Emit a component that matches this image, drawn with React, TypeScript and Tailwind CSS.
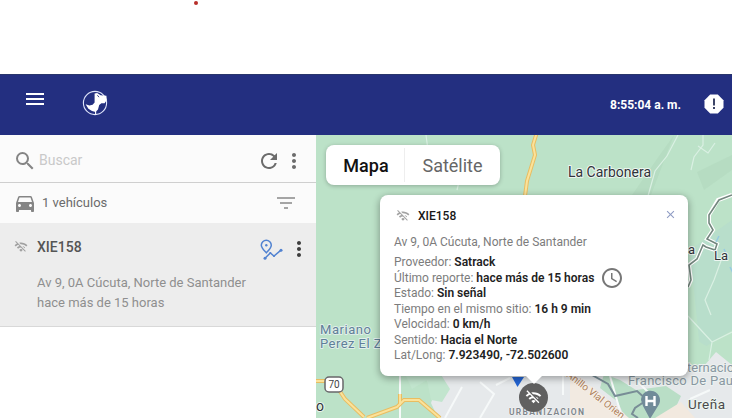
import React from 'react';
import {
  MdMenu, MdSearch, MdRefresh, MdMoreVert, MdFilterList, MdDirectionsCar,
  MdAccessTime, MdWifiOff, MdClose,
} from 'react-icons/md';

function DogLogo() {
  return (
    <svg viewBox="0 0 26 26" className="size-[26px]">
      <circle cx="13" cy="13" r="11.6" fill="none" stroke="#dfe5fa" strokeWidth="1.1" />
      <path
        d="M12.6 3.4 L15.2 3 L18.6 5.2 L24.4 5.8 L24.8 10 L22.6 13.2 L19.4 13.2 L17.2 15 L16 19.6 L13.6 22 L10 21 L6.4 18.8 L3.6 14.2 L7.4 15.6 L10.6 14.8 L12.6 12.6Z"
        fill="#fff"
      />
      <path d="M15.4 5.2L17 7.2" stroke="#232f80" strokeWidth=".9" />
      <path d="M13.6 21V24.4" stroke="#fff" strokeWidth="1.1" />
    </svg>
  );
}

function RouteIcon() {
  return (
    <svg viewBox="0 0 24 22" className="h-[22px] w-6" fill="none" stroke="#5283d1" strokeWidth="1.5">
      <path d="M7.3 13.8C4.3 10.5 2.3 8.6 2.3 6.2A5 5 0 0 1 12.3 6.2C12.3 8.6 10.3 10.8 7.3 13.8Z" />
      <circle cx="7.3" cy="6.2" r="1.2" fill="#5283d1" stroke="none" />
      <path d="M6 19.2L11.3 14L15 17L22 11.2" />
      <circle cx="6" cy="19.2" r="1.5" fill="#5283d1" stroke="none" />
      <circle cx="11.3" cy="14" r="1.1" fill="#5283d1" stroke="none" />
      <circle cx="15" cy="17" r="1.1" fill="#5283d1" stroke="none" />
      <circle cx="22" cy="11.2" r="1.5" fill="#5283d1" stroke="none" />
    </svg>
  );
}

function Header() {
  return (
    <header className="flex h-[61px] shrink-0 items-start border-t border-[#29366c] bg-[#232f80] pl-[23px] text-white">
      <MdMenu className="mt-[12px] size-6" />
      <div className="ml-[35px] mt-[15px]"><DogLogo /></div>
      <span className="ml-auto mt-[22px] text-[12px] leading-4 font-bold">8:55:04 a. m.</span>
      <svg viewBox="0 0 20 20" className="ml-[23px] mr-[8px] mt-[19px] size-5">
        <path d="M6.2 .5H13.8L19.5 6.2V13.8L13.8 19.5H6.2L.5 13.8V6.2Z" fill="#fff" />
        <path d="M10 4.5V11.4M10 13V15" stroke="#333b60" strokeWidth="1.9" />
      </svg>
    </header>
  );
}

function Sidebar() {
  return (
    <aside className="flex w-[316px] shrink-0 flex-col bg-white">
      <div className="flex h-12 items-center border-b border-[#cfcfcf] bg-[#fbfbfb] pl-[13px] pt-1">
        <MdSearch className="size-6 text-[#858585]" />
        <span className="ml-[2px] text-[14px] text-[#c9c9c9]">Buscar</span>
        <MdRefresh className="ml-auto size-6 text-[#6c6c6c]" />
        <MdMoreVert className="ml-px mr-[10px] size-6 text-[#6c6c6c]" />
      </div>
      <div className="flex h-10 items-center bg-[#fbfbfb] pl-[13px]">
        <MdDirectionsCar className="size-6 text-[#858585]" />
        <span className="ml-[5px] text-[13px] text-[#6b6b6b]">1 vehículos</span>
        <MdFilterList className="ml-auto mr-[18px] size-6 text-[#a5a5a5]" />
      </div>
      <div className="h-[104px] border-b border-[#d8d8d8] bg-[#ededed]">
        <div className="flex h-[49px] items-center pl-[14px]">
          <MdWifiOff className="mb-[2px] size-[14px] text-[#a0a0a0]" />
          <span className="ml-[9px] text-[14px] font-medium text-[#555]">XIE158</span>
          <div className="ml-auto mt-[4px]"><RouteIcon /></div>
          <MdMoreVert className="ml-1 mr-[5px] mt-[3px] size-6 text-[#3e3e3e]" />
        </div>
        <div className="pl-[37px] pt-px text-[13px] leading-5 text-[#8f8f8f]">
          <p>Av 9, 0A Cúcuta, Norte de Santander</p>
          <p>hace más de 15 horas</p>
        </div>
      </div>
    </aside>
  );
}

function MapCanvas() {
  return (
    <svg viewBox="316 135 416 283" className="absolute inset-0 h-full w-full" fill="none">
      <rect x="316" y="135" width="416" height="283" fill="#bce2c8" />
      <path d="M690 250L732 220V330L700 350Z" fill="#b8decb" />
      <path d="M674 135L651 195L632 195L659 156Z M697 172L732 155V170L704 190Z" fill="#b4dabf" opacity=".7" />
      <path d="M400 370L425 378L435 391L431 403L438 418H732V365L716 352L700 356L688 370Z" fill="#e6e9eb" />
      <path d="M438 370L450 389L442 402L431 400L427 380L412 389L403 370Z" fill="#c2e5ce" />
      <path d="M604 374L620 380L636 390L666 386L681 396L674 411L660 418H625L618 402L600 388Z" fill="#b9dec6" />
      <path d="M688 335L716 352L704 366L688 370Z" fill="#bce2c8" />
      <path d="M570 375L594 388L629 418H570Z" fill="#f2eae1" />
      <path d="M655 418L681 402L695 418Z" fill="#f2e9df" />
      <g stroke="#daf0e3" strokeWidth="1.2">
        <path d="M426 135L429 158M457 190L463 165M678 135L667 156L655 171L648 196M703 135V145L694 157L691 170M698 146L708 153L715 143" />
        <path d="M688 316L700 329L712 342L732 332M711 315L705 300L714 280L722 258M712 342L709 360" />
      </g>
      <g stroke="#f6f9f9" strokeWidth="2">
        <path d="M400 370V418M563 375V395M610 376L622 418M480 382L494 394L480 418M445 418L462 387M496 385L510 378" />
        <path d="M650 394L635 379M690 399L710 390" />
      </g>
      <g stroke="#e9bd61" strokeWidth="4">
        <path d="M537 132L533 145L535 155L527 181L525 196" />
        <path d="M316 381H333L345 399L364 417M367 418L397 407L404 400H419L440 418M400 394V405" />
      </g>
      <g stroke="#fbe29a" strokeWidth="2">
        <path d="M537 132L533 145L535 155L527 181L525 196" />
        <path d="M316 381H333L345 399L364 417M367 418L397 407L404 400H419L440 418M400 394V405" />
      </g>
      <path d="M732 195L718 200L709 215L709 223L713 230L707 239L717 244L715 250L706 247L703 245L697 259L689 265L691 280L688 287" stroke="#fff" strokeWidth="4" />
      <path d="M732 195L719 200L709 215L709 223L713 230L707 239L717 244L715 250L706 247L703 245L697 259L689 265L691 280L688 287" stroke="#73877e" strokeWidth="1.6" />
      <path d="M592 375L608 384L615 396L637 391L647 400L635 408L632 414L638 418" stroke="#788d96" strokeWidth="2" />
      <path d="M716 242L719 236M724 249L728 258M730 267L735 277" stroke="#97cbe1" strokeWidth="1.5" />

      <g fontFamily="Roboto, sans-serif" paintOrder="stroke" strokeLinejoin="round">
        <g fill="#30333a" stroke="#edf6f0" strokeWidth="2">
          <text x="568" y="177" fontSize="14" textLength="83">La Carbonera</text>
          <text x="688" y="254" fontSize="13">a</text>
          <text x="714" y="260" fontSize="13">La</text>
          <text x="688" y="409" fontSize="13.5" textLength="37" fill="#4a4a4a">Ureña</text>
          <text x="316" y="411" fontSize="14">o</text>
        </g>
        <g fill="#608098" stroke="#e1efeb" strokeWidth="1.8" fontSize="13">
          <text x="320" y="334" textLength="51">Mariano</text>
          <text x="320" y="348" textLength="69">Perez El Za</text>
        </g>
        <g fill="#8998a2" stroke="#edf2f0" strokeWidth="1.8" fontSize="13">
          <text x="687" y="372">ternacio</text>
          <text x="628" y="385" textLength="105">Francisco De Pau</text>
        </g>
        <text x="509" y="415" fontSize="8.5" fontWeight="600" textLength="75" fill="#7e858b" stroke="#f3f3f3" strokeWidth="1">URBANIZACION</text>
        <text x="566" y="376" fontSize="10" fill="#ad805a" stroke="#f7f0e9" strokeWidth="1.5" transform="rotate(38 566 376)">Anillo Vial Orien</text>
      </g>
      <rect x="325" y="377" width="18" height="15" rx="4" fill="#fff" stroke="#68676a" strokeWidth="1.5" />
      <text x="334" y="388.2" fontSize="10" fontFamily="Roboto, sans-serif" textAnchor="middle" fill="#444">70</text>
      <path d="M641 400A9.5 9.5 0 1 1 658 406L650 419L643 406Z" fill="#718b99" />
      <path d="M646.5 396V406M654.5 396V406M646.5 401H654.5" stroke="#fff" strokeWidth="2.4" />
      <path d="M512 377H524L517.5 387Z" fill="#2364d2" />
    </svg>
  );
}

const details = [
  ['Proveedor:', 'Satrack'],
  ['Último reporte:', 'hace más de 15 horas'],
  ['Estado:', 'Sin señal'],
  ['Tiempo en el mismo sitio:', '16 h 9 min'],
  ['Velocidad:', '0 km/h'],
  ['Sentido:', 'Hacia el Norte'],
  ['Lat/Long:', '7.923490, -72.502600'],
];

function InfoPopup() {
  return (
    <section className="absolute left-[64px] top-[60px] h-[181px] w-[308px] rounded-lg bg-white px-[14px] pt-[12px] text-[12px] text-[#7c7c7c] shadow-[0_2px_7px_1px_rgba(0,0,0,0.3)]">
      <div className="flex h-[18px] items-center">
        <MdWifiOff className="ml-[2px] size-[14px] text-[#a3a3a3]" />
        <strong className="ml-2 font-medium text-[#171717]">XIE158</strong>
        <MdClose className="-mr-[3px] mb-[3px] ml-auto size-[13px] text-[#8f9cc4]" />
      </div>
      <p className="mt-[9px] leading-4">Av 9, 0A Cúcuta, Norte de Santander</p>
      <dl className="mt-[5px]">
        {details.map(([label, value], i) => (
          <div key={label} className="flex h-[15.5px] items-center gap-[3px] whitespace-nowrap leading-[15.5px]">
            <dt>{label}</dt>
            <dd className="font-semibold text-[#222]">{value}</dd>
            {i === 1 && <MdAccessTime className="ml-[3px] size-6 shrink-0 text-[#777]" />}
          </div>
        ))}
      </dl>
      <svg viewBox="0 0 18 9" className="absolute -bottom-2 left-[145px] h-[9px] w-[18px]">
        <path d="M0 0H18L9 9Z" fill="#fff" />
      </svg>
    </section>
  );
}

export default function App() {
  return (
    <div className="flex h-[418px] w-[732px] flex-col overflow-hidden bg-white font-['Roboto',sans-serif]">
      <div className="flex h-[74px] shrink-0 pl-[194px] pt-[1px]">
        <span className="size-1 rounded-full bg-[#b72f2a]" />
      </div>
      <Header />
      <main className="flex h-[283px]">
        <Sidebar />
        <div className="relative h-full grow overflow-hidden">
          <MapCanvas />
          <div className="absolute left-[10px] top-[10px] flex h-10 w-[174px] items-center rounded-lg bg-white text-[18px] shadow-[0_1px_4px_rgba(0,0,0,0.25)]">
            <span className="flex h-[34px] w-[79px] items-center justify-center border-r border-[#eee] pl-[2px] font-medium text-[#111]">Mapa</span>
            <span className="flex-1 text-center text-[#666]">Satélite</span>
          </div>
          <div className="absolute left-[203px] top-[248px] flex size-[29px] items-center justify-center rounded-full bg-[#606060]">
            <MdWifiOff className="size-[17px] text-white" />
          </div>
          <InfoPopup />
        </div>
      </main>
    </div>
  );
}
